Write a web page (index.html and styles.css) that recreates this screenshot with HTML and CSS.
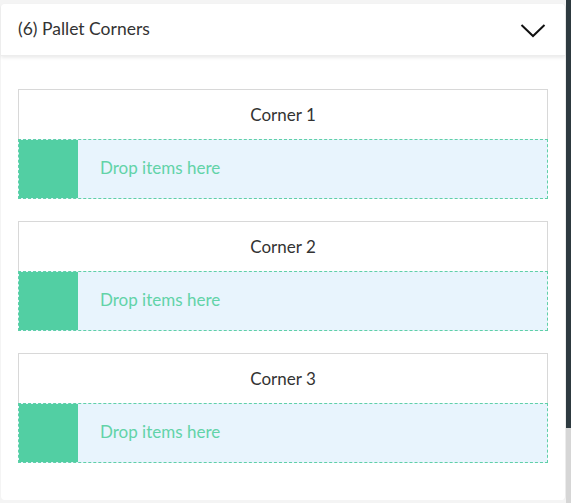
FILE: index.html
```html
<!DOCTYPE html>
<html>
<head>
<meta charset="utf-8">
<link rel="stylesheet" href="styles.css">
</head>
<body>
<div class="frame">
  <div class="card">
    <div class="header">
      <span class="title">(6) Pallet Corners</span>
      <svg class="chevron" width="26" height="16" viewBox="0 0 26 16"><path d="M1.5 3 L13 14 L24.5 3" fill="none" stroke="#111" stroke-width="2"/></svg>
    </div>
    <div class="content">
      <div class="corner">
        <div class="corner-title">Corner 1</div>
        <div class="drop"><div class="swatch"></div><span class="drop-text">Drop items here</span></div>
      </div>
      <div class="corner">
        <div class="corner-title">Corner 2</div>
        <div class="drop"><div class="swatch"></div><span class="drop-text">Drop items here</span></div>
      </div>
      <div class="corner">
        <div class="corner-title">Corner 3</div>
        <div class="drop"><div class="swatch"></div><span class="drop-text">Drop items here</span></div>
      </div>
    </div>
  </div>
  <div class="scrollbar"><div class="thumb"></div></div>
</div>
</body>
</html>
```
FILE: styles.css
```css
html, body {
  margin: 0;
  padding: 0;
}
body {
  width: 571px;
  height: 503px;
  overflow: hidden;
  background: #f4f4f4;
  font-family: Lato, "Noto Sans", sans-serif;
}
.frame {
  display: flex;
  height: 503px;
}
.card {
  width: 565px;
  margin: 4px 0 3px 1px;
  background: #fff;
  border-right: 1px solid #ececec;
  border-radius: 4px;
  display: flex;
  flex-direction: column;
}
.header {
  height: 52px;
  display: flex;
  align-items: center;
  justify-content: space-between;
  padding: 0 19px 0 17px;
  box-shadow: 0 2px 3px rgba(0,0,0,0.08);
  border-bottom: 1px solid #ededed;
  box-sizing: border-box;
}
.title {
  font-size: 17.5px;
  color: #333;
  margin-top: -2px;
}
.chevron {
  display: block;
  margin-top: 0;
}
.content {
  padding: 33px 17px 0 17px;
  display: flex;
  flex-direction: column;
  gap: 22px;
}
.corner {
  border: 1px solid #d8d8d8;
  border-bottom: none;
}
.corner-title {
  height: 49px;
  display: flex;
  align-items: center;
  justify-content: center;
  font-size: 17px;
  color: #333;
}
.drop {
  height: 58px;
  margin: 0 -1px;
  border: 1px dashed #5fd0a8;
  background: #e8f4fd;
  display: flex;
  align-items: center;
}
.swatch {
  width: 59px;
  align-self: stretch;
  background: #52cfa3;
}
.drop-text {
  margin-left: 22px;
  margin-bottom: 3px;
  font-size: 17px;
  color: #62d3a8;
}
.scrollbar {
  width: 5px;
  background: #d6d6d6;
  display: flex;
  flex-direction: column;
}
.thumb {
  height: 428px;
  background: #2e3a40;
}
```
